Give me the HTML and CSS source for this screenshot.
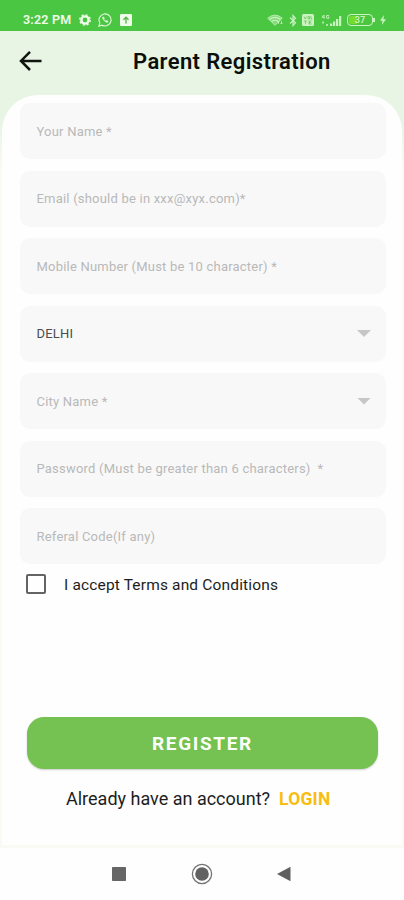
FILE: index.html
```html
<!DOCTYPE html>
<html lang="en">
<head>
<meta charset="utf-8">
<title>Parent Registration</title>
<link rel="stylesheet" href="styles.css">
</head>
<body>
<div class="status">
  <span class="time">3:22 PM</span>
  <svg class="gear" width="12" height="12" viewBox="0 0 12 12"><circle cx="6" cy="6" r="3.6" fill="none" stroke="currentColor" stroke-width="2.4"/><circle cx="6" cy="6" r="5.2" fill="none" stroke="currentColor" stroke-width="1.4" stroke-dasharray="2.04 2.04"/></svg>
  <svg class="chat" width="14" height="14" viewBox="0 0 14 14" fill="none" stroke="currentColor"><path d="M.9 13.1l.9-3.3A6 6 0 1 1 4.2 12.200Z" stroke-width="1.1"/><path d="M4.600 4.100c-.8 1.500 2.600 5.600 4.800 5.300l.8-1.100-1.600-1-.8.7C6.900 7.600 6.300 7 5.900 6.200l.6-.8-.8-1.500Z" fill="currentColor" stroke-width=".4"/></svg>
  <svg class="upload" width="12" height="12" viewBox="0 0 12 12"><rect width="12" height="12" rx="1.2" fill="currentColor"/><path d="M6 9.500V3.500M3.500 5.700L6 3.200l2.500 2.500" fill="none" stroke="#55b548" stroke-width="1.300"/></svg>
  <div class="signals">
    <svg width="17" height="12" viewBox="0 0 17 12" fill="none" stroke="currentColor"><path d="M.7 4.200Q8 -2 15.300 4.200L8 11.300Z" fill="currentColor" fill-opacity=".45" stroke-width=".8"/><path d="M2.500 5.400Q8 1.200 13.500 5.400M4.700 7.500Q8 5 11.300 7.500" stroke-width="1.200"/><path d="M11.500 10V7M14.500 7v3M10.500 8l1-1 1 1M13.500 9l1 1 1-1" stroke-width=".8"/></svg>
    <svg class="bt" width="8" height="13" viewBox="0 0 8 13" fill="none" stroke="currentColor" stroke-width="1.200"><path d="M1 3.500l5.500 5.300L4 11.500v-10l2.500 2.700L1 9.500"/></svg>
    <svg class="volte" width="12" height="12" viewBox="0 0 12 12"><rect width="12" height="12" rx="1.500" fill="currentColor"/><path d="M2 2.500l1.200 2.500 1.200-2.500M6 2.500v2.500h1.500V2.500H6M9 2v3h1.300M2 7h3M3.500 7v3M9.500 7H7v3h2.500M7 8.500h2" fill="none" stroke="#55b548" stroke-width=".6"/></svg>
    <svg class="cell" width="21" height="13" viewBox="0 0 21 13"><g fill="currentColor"><path d="M9 9.500h2.200V12H9zM12 7.500h2.200V12H12zM15 5h2.200v7H15zM18 2h2.200v10H18z"/><path d="M1 7.500h2v2H1zM5 10h2v2H5z" opacity=".75"/></g><path d="M2.700 1L1.200 3.300h2.300M3 1v3.700M8 1.500H5.600v2.700H8V3H7" fill="none" stroke="currentColor" stroke-width=".9"/></svg>
    <span class="battery"><span class="level">37</span></span>
    <svg class="bolt" width="6" height="10" viewBox="0 0 6 10"><path d="M4 0L0 5.700h2.500L1.800 10 6 4.200H3.400Z" fill="currentColor"/></svg>
  </div>
</div>
<main class="screen">
  <header class="top">
    <svg class="back" width="24" height="22" viewBox="0 0 24 22"><path d="M23.500 11H3.500M12 1.800L3 11l9 9" fill="none" stroke="#10150f" stroke-width="2.500"/></svg>
    <h1 class="title">Parent Registration</h1>
  </header>
  <form class="card">
    <div class="fields">
      <div class="field"><span>Your Name *</span></div>
      <div class="field"><span>Email (should be in xxx@xyx.com)*</span></div>
      <div class="field"><span>Mobile Number (Must be 10 character) *</span></div>
      <div class="field"><span class="state">DELHI</span><i class="caret"></i></div>
      <div class="field"><span>City Name *</span><i class="caret"></i></div>
      <div class="field"><span>Password (Must be greater than 6 characters)&nbsp; *</span></div>
      <div class="field"><span>Referal Code(If any)</span></div>
    </div>
    <label class="terms"><span class="box"></span><span class="accept">I accept Terms and Conditions</span></label>
    <button class="register" type="button">REGISTER</button>
    <p class="account"><span class="question">Already have an account?</span><a class="login">LOGIN</a></p>
  </form>
</main>
<nav class="nav">
  <svg width="14" height="14" viewBox="0 0 14 14"><rect width="14" height="14" rx=".8" fill="#666"/></svg>
  <svg width="22" height="22" viewBox="0 0 22 22"><circle cx="11" cy="11" r="9.600" fill="none" stroke="#737373" stroke-width="1.300"/><circle cx="11" cy="11" r="6.800" fill="#626262"/></svg>
  <svg width="14" height="16" viewBox="0 0 14 16"><path d="M0 8L13.500.8v14.400Z" fill="#606060"/></svg>
</nav>
</body>
</html>
```
FILE: styles.css
```css
* { box-sizing: border-box; }
body {
  margin: 0;
  width: 404px;
  height: 900px;
  overflow: hidden;
  background: #fefefe;
  font-family: Roboto, sans-serif;
  display: flex;
  flex-direction: column;
}
svg { display: block; flex: none; }
span, a { white-space: nowrap; }
.status {
  height: 31px;
  flex: none;
  background: #4bc643;
  color: #e4f8dc;
  display: flex;
  align-items: center;
  padding: 9px 18px 0 23px;
}
.time { width: 49px; font-size: 12.5px; font-weight: 600; letter-spacing: .2px; line-height: 14px; color: #effce9; }
.gear { margin-left: 7px; color: #effce9; }
.chat { margin-left: 7px; }
.upload { margin-left: 8px; color: #effce9; }
.signals { margin-left: auto; display: flex; align-items: center; color: #c9f3bf; }
.bt { margin-left: 5px; }
.volte { margin-left: 5px; }
.cell { margin-left: 7px; }
.battery {
  position: relative;
  margin-left: 5px;
  width: 26px;
  height: 12px;
  padding: 1px;
  border: 1.5px solid #c9f3bf;
  border-radius: 4px;
  display: flex;
}
.battery::after {
  content: "";
  position: absolute;
  left: 25px;
  top: 3px;
  width: 2px;
  height: 4px;
  background: #c9f3bf;
}
.level {
  flex: 1;
  border-radius: 2px;
  background: linear-gradient(90deg, #73dc2c 35%, transparent 35%);
  font-size: 9px;
  line-height: 8px;
  font-weight: 600;
  text-align: center;
}
.bolt { margin-left: 7px; }
.screen {
  height: 817px;
  flex: none;
  padding: 0 2px 3px;
  background: linear-gradient(#e8f5e4 0, #e8f5e4 95px, #f8faf3 135px, #f9faf4 100%);
  display: flex;
  flex-direction: column;
}
.top { height: 64px; flex: none; display: flex; align-items: center; padding: 0 0 4px 16px; }
.title { margin: 2px 0 0 91px; font-size: 22px; line-height: 28px; font-weight: 600; letter-spacing: .38px; color: #0b0f0b; white-space: nowrap; }
.card {
  flex: 1;
  margin: 0;
  padding: 8px 16px 0 18px;
  background: #fefefe;
  border-radius: 36px 36px 0 0;
  display: flex;
  flex-direction: column;
}
.fields { display: flex; flex-direction: column; gap: 11.5px; }
.field {
  height: 56px;
  border-radius: 10px;
  background: #f8f8f8;
  padding: 0 15px 0 16.5px;
  display: flex;
  align-items: center;
  justify-content: space-between;
  font-size: 13px;
  letter-spacing: .21px;
  color: #b9b9b9;
}
.state { color: #4c4c4c; }
.caret { width: 14px; height: 7px; background: #c6c6c6; clip-path: polygon(0 0, 100% 0, 50% 100%); }
.terms { display: flex; align-items: center; height: 20px; margin: 9.5px 0 0 6px; }
.box { width: 20px; height: 20px; border: 2px solid #636363; border-radius: 2px; }
.accept { margin: 2px 0 0 18px; font-size: 15.5px; letter-spacing: .16px; color: #1d1d1d; }
.register {
  margin: 123px 8px 0 7px;
  height: 52px;
  flex: none;
  padding: 1px 0 0;
  border: 0;
  border-radius: 17px;
  background: #75c151;
  color: #fbfff9;
  font: 700 19px/51px Roboto, sans-serif;
  letter-spacing: 1.65px;
  box-shadow: 0 1px 2px #0003;
}
.account { margin: 19px 0 0 46px; display: flex; align-items: center; height: 22px; font-size: 18px; color: #1d1d1d; }
.login { margin-left: 9px; color: #f7bd10; font-weight: 700; font-size: 17.5px; letter-spacing: .2px; }
.nav { flex: 1; display: flex; align-items: center; justify-content: space-between; padding: 0 113px 0 112px; }
```
